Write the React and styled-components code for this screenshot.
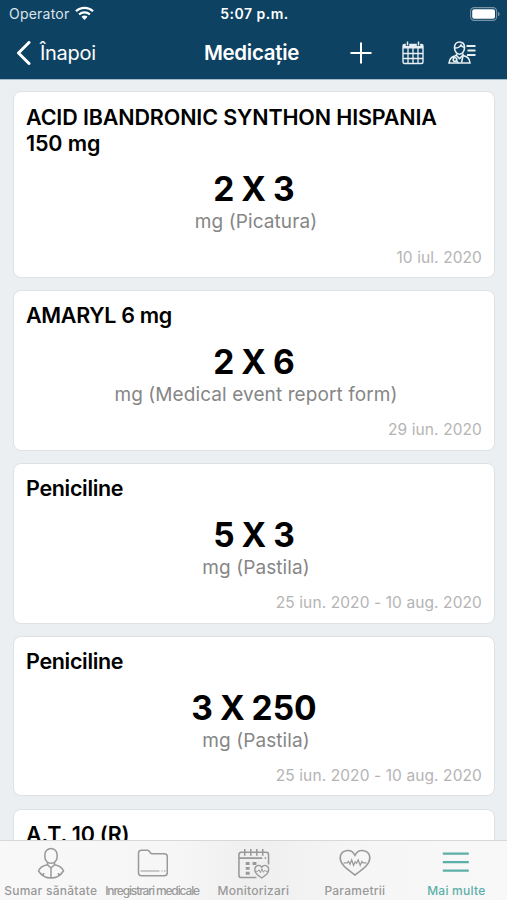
import React from "react";
import styled, { createGlobalStyle } from "styled-components";

const GlobalStyle = createGlobalStyle`
  * {
    box-sizing: border-box;
  }
  body {
    margin: 0;
    overflow: hidden;
    font-family: Inter, "Liberation Sans", sans-serif;
  }
`;

const Screen = styled.div`
  display: flex;
  flex-direction: column;
  width: 507px;
  height: 900px;
  overflow: hidden;
  background-color: #ebeff2;
`;

const Header = styled.header`
  flex: none;
  height: 80px;
  color: #fff;
  background-color: #0d4262;
  border-bottom: 1px solid #a3bac8;
`;

const StatusBar = styled.div`
  display: grid;
  grid-template-columns: 1fr auto 1fr;
  align-items: center;
  height: 27px;
  padding: 0 7px 0 9px;
`;

const Carrier = styled.div`
  display: flex;
  align-items: center;
  gap: 6px;
  color: #dce5eb;
  font-size: 14px;
  letter-spacing: 0.22px;
`;

const Clock = styled.div`
  font-size: 14px;
  font-weight: 600;
  letter-spacing: 0.5px;
`;

const BatterySlot = styled.div`
  display: flex;
  justify-content: flex-end;
`;

const NavBar = styled.div`
  display: grid;
  grid-template-columns: 1fr auto 1fr;
  align-items: center;
  height: 51px;
  padding: 0 31px 0 16px;
`;

const Back = styled.div`
  display: flex;
  align-items: center;
  gap: 9px;
  font-size: 20px;
  letter-spacing: -0.3px;
`;

const Title = styled.h1`
  margin: 0;
  padding-left: 11px;
  font-size: 20.5px;
  font-weight: 600;
  letter-spacing: -0.3px;
`;

const Actions = styled.div`
  display: flex;
  align-items: center;
  justify-content: flex-end;
  svg + svg {
    margin-left: 24px;
  }
  svg:first-child {
    margin-right: 6px;
  }
`;

const List = styled.main`
  flex: 1;
  min-height: 0;
  display: flex;
  flex-direction: column;
  gap: 12.4px;
  padding: 11.3px 12px 0 13px;
  overflow: hidden;
`;

const Card = styled.article`
  flex: none;
  display: flex;
  flex-direction: column;
  height: ${(p) => (p.$tall ? 186.5 : 160.5)}px;
  padding: ${(p) => (p.$tall ? 12 : 11)}px 12px 0;
  background-color: #fff;
  border: 1px solid #dee2e4;
  border-radius: 8px;
`;

const Name = styled.h2`
  margin: 0;
  padding-right: 36px;
  font-size: 21.5px;
  line-height: 26px;
  font-weight: 600;
  letter-spacing: ${(p) => p.$tracking || 0}px;
`;

const Dose = styled.div`
  margin-top: ${(p) => (p.$tall ? 13 : 14)}px;
  text-align: center;
  font-size: 33.5px;
  line-height: 40px;
  font-weight: 700;
  word-spacing: -1px;
`;

const Unit = styled.div`
  padding-left: 4px;
  color: #868686;
  text-align: center;
  font-size: 19px;
  line-height: 25px;
  letter-spacing: 0.09px;
`;

const Period = styled.div`
  margin-top: ${(p) => (p.$tall ? 14 : 13)}px;
  color: #b4b4b4;
  text-align: right;
  font-size: 15.5px;
  line-height: 20px;
  letter-spacing: 0.1px;
`;

const TabBar = styled.nav`
  flex: none;
  display: grid;
  grid-template-columns: repeat(5, 1fr);
  height: 60px;
  background: linear-gradient(90deg, #f8f8f8, #f6f6f6 35%, #efefef 50%, #f6f6f6 72%, #f8f8f8);
  border-top: 1px solid #d7d8d9;
`;

const Tab = styled.div`
  display: flex;
  flex-direction: column;
  align-items: center;
  padding-top: 5px;
  color: ${(p) => (p.$active ? "#5cafa8" : "#999")};
`;

const TabLabel = styled.span`
  margin-top: 2px;
  font-size: 12px;
  line-height: 17px;
  font-weight: 500;
  white-space: nowrap;
  letter-spacing: ${(p) => p.$tracking}px;
`;

const Wifi = () => (
  <svg width="19" height="15" viewBox="0 0 19 15" fill="none" stroke="#fff" strokeWidth="2.2">
    <path d="M1 5.3C5.700.7 13.300.7 18 5.300M4.100 8.500c3-2.900 7.800-2.900 10.800 0" />
    <path d="M6.500 10.800c1.700-1.600 4.300-1.600 6 0l-3 3.100z" fill="#fff" stroke="none" />
  </svg>
);

const Battery = () => (
  <svg width="30" height="14" viewBox="0 0 30 14">
    <rect x=".6" y=".6" width="26" height="12.800" rx="3.600" fill="none" stroke="#7894a6" strokeWidth="1.100" />
    <rect x="2.200" y="2.200" width="22.800" height="9.600" rx="2" fill="#fff" />
    <path d="M28 4.700c2.200 1 2.200 3.600 0 4.600z" fill="#7894a6" />
  </svg>
);

const Chevron = () => (
  <svg width="15" height="24" viewBox="0 0 15 24" fill="none" stroke="#fff" strokeWidth="3">
    <path d="M13 1.500 2.500 12 13 22.500" strokeLinecap="round" strokeLinejoin="round" />
  </svg>
);

const Plus = () => (
  <svg width="22" height="22" viewBox="0 0 22 22" stroke="#fff" strokeWidth="2">
    <path d="M11 .5v21M.5 11h21" />
  </svg>
);

const Calendar = () => (
  <svg width="22" height="24" viewBox="0 0 22 24" fill="none" stroke="#e8f0f4">
    <rect x="1" y="3.500" width="20" height="19" rx="1.500" strokeWidth="1.400" />
    <path d="M1 3.500h20v4H1z" fill="#e8f0f4" stroke="none" />
    <path d="M5.500 1v4M16.500 1v4" stroke="#0d4262" strokeWidth="3.400" />
    <path d="M5.500 .5v4M16.500 .5v4" strokeWidth="1.500" />
    <path d="M1 12.500h20M1 17.500h20M6 7v15M11 7v15M16 7v15" strokeWidth="1.300" />
  </svg>
);

const Doctor = () => (
  <svg width="28" height="23" viewBox="0 0 28 23" fill="none" stroke="#e8f0f4" strokeWidth="1.600">
    <path d="M6.500 6.500C6.500 3 8.500 1 11.500 1s5 2 5 5.500-2 6.700-5 6.700-5-3.200-5-6.700z" />
    <path d="M7 7c3 0 5-1 6-3 .5 1.500 1.500 2.300 3.500 2.500M8.500 12.500v2c-4 1-7 2-7.500 7.500h21c-.5-5.500-3-6.500-7-7.500v-2M8.500 14.500l3 3 3-3" />
    <circle cx="7" cy="18.500" r="1.800" />
    <path d="M5 15.500l1 1.500M15 15l-1.500 6.500M8.500 20l2 2" />
    <path d="M18.500 5h9M19.500 9.500h8M19 14h8.500" strokeWidth="1.800" />
  </svg>
);

const PersonIcon = () => (
  <svg width="32" height="34" viewBox="0 0 32 34" fill="none" stroke="currentColor" strokeWidth="1.500">
    <rect x="9.900" y="2.500" width="12.200" height="14.800" rx="6.100" />
    <path d="M12.500 16.500v2.200C8 19.500 5 21 3.500 25c3.200 4.800 7.500 7.100 12.500 7.100s9.300-2.300 12.500-7.100C27 21 24 19.500 19.500 18.700v-2.200M12.500 18.700l3.500 3.300 3.500-3.300M16 22v10M8.500 27v3M23.500 27v3" />
  </svg>
);

const FolderIcon = () => (
  <svg width="32" height="34" viewBox="0 0 32 34" fill="none" stroke="currentColor" strokeWidth="1.500">
    <path d="M2.500 7.300c0-2 1-3 3-3h6c1 0 1.500.4 2 1.200l.8 1.200c.5.700 1 1 2 1h12c2 0 3 1 3 3v16c0 2-1 3-3 3H5.500c-2 0-3-1-3-3z" />
    <path d="M4.500 25h19M25.500 25h1M28 25h1.500" strokeWidth="1.200" />
  </svg>
);

const MonitorIcon = () => (
  <svg width="33" height="34" viewBox="0 0 34 34" fill="none" stroke="currentColor" strokeWidth="1.600">
    <path d="M20 32H4.500C2.800 32 2 31.200 2 29.500V8.500C2 6.800 2.800 6 4.500 6H30c1.700 0 2.500.8 2.500 2.500v10M2 12h24M28.500 12h1.500" />
    <path d="M8 2.500v7M14.200 2.500v7M20.400 2.500v7M26.500 2.500v7" />
    <path d="M9 17.500h4M16 17.500h4M9 22.500h4M9 27.500h4" strokeWidth="3" />
    <path d="M25.500 32.500c-4-2.500-7.200-5-7.200-8.800 0-4.200 5.300-5.700 7.200-2.200 1.900-3.500 7.200-2 7.200 2.200 0 3.800-3.200 6.300-7.200 8.800z" strokeWidth="1.400" />
    <path d="M18.500 25.500h3l1.300-1.500 1.300 3 1.600-4 1.400 3.500 1.400-2 1 1h3" strokeWidth="1" />
  </svg>
);

const HeartIcon = () => (
  <svg width="32" height="34" viewBox="0 0 32 34" fill="none" stroke="currentColor" strokeWidth="1.600">
    <path d="M16 29C8 23 1.200 18.500 1.200 12 1.200 4 12 1.500 16 9.300 20 1.500 30.800 4 30.800 12c0 6.500-6.800 11-14.800 17z" />
    <path d="M4.500 16.800h3.800l1.200-1.500 1.500 3 1.700-4.500 1.800 5.500 1.700-3.500 1.500 1.500 1.500-3.500 2 5.500 1.700-4 1.200 1.500h3.400" strokeWidth="1.200" />
  </svg>
);

const MenuIcon = () => (
  <svg width="28" height="34" viewBox="0 0 28 34" stroke="currentColor" strokeWidth="2.200">
    <path d="M.8 7.600h26M.8 16.200h26M.8 24.700h26" />
  </svg>
);

const medications = [
  {
    name: "ACID IBANDRONIC SYNTHON HISPANIA 150 mg",
    tracking: -0.13,
    dose: "2 X 3",
    unit: "mg (Picatura)",
    period: "10 iul. 2020",
    tall: true,
  },
  {
    name: "AMARYL 6 mg",
    tracking: -0.32,
    dose: "2 X 6",
    unit: "mg (Medical event report form)",
    period: "29 iun. 2020",
  },
  {
    name: "Peniciline",
    tracking: -0.33,
    dose: "5 X 3",
    unit: "mg (Pastila)",
    period: "25 iun. 2020 - 10 aug. 2020",
  },
  {
    name: "Peniciline",
    tracking: -0.33,
    dose: "3 X 250",
    unit: "mg (Pastila)",
    period: "25 iun. 2020 - 10 aug. 2020",
  },
  { name: "A.T. 10 (R)", tracking: -0.25 },
];

const tabs = [
  { label: "Sumar sănătate", icon: PersonIcon, tracking: 0.25 },
  { label: "Inregistrari medicale", icon: FolderIcon, tracking: -1.13 },
  { label: "Monitorizari", icon: MonitorIcon, tracking: 0.25 },
  { label: "Parametrii", icon: HeartIcon, tracking: 0.25 },
  { label: "Mai multe", icon: MenuIcon, tracking: 0.25, active: true },
];

const App = () => {
  return (
    <Screen>
      <GlobalStyle />
      <Header>
        <StatusBar>
          <Carrier>
            Operator <Wifi />
          </Carrier>
          <Clock>5:07 p.m.</Clock>
          <BatterySlot>
            <Battery />
          </BatterySlot>
        </StatusBar>
        <NavBar>
          <Back>
            <Chevron />
            Înapoi
          </Back>
          <Title>Medicație</Title>
          <Actions>
            <Plus />
            <Calendar />
            <Doctor />
          </Actions>
        </NavBar>
      </Header>
      <List>
        {medications.map((item, i) => (
          <Card key={i} $tall={item.tall}>
            <Name $tracking={item.tracking}>{item.name}</Name>
            {item.dose && (
              <>
                <Dose $tall={item.tall}>{item.dose}</Dose>
                <Unit>{item.unit}</Unit>
                <Period $tall={item.tall}>{item.period}</Period>
              </>
            )}
          </Card>
        ))}
      </List>
      <TabBar>
        {tabs.map(({ label, icon: Icon, tracking, active }) => (
          <Tab key={label} $active={active}>
            <Icon />
            <TabLabel $tracking={tracking}>{label}</TabLabel>
          </Tab>
        ))}
      </TabBar>
    </Screen>
  );
};

export default App;
